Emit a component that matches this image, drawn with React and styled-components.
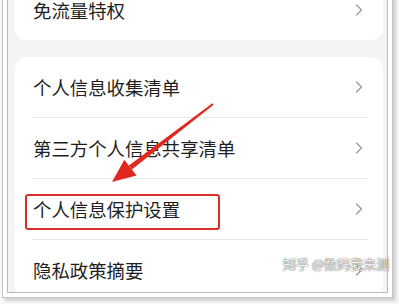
import React from "react";
import styled, { createGlobalStyle } from "styled-components";

const Global = createGlobalStyle`
  html, body { margin: 0; padding: 0; background: #ffffff; }
  body { font-family: "Noto Sans CJK SC", "Noto Sans", sans-serif; }
`;

const Stage = styled.div`
  position: relative;
  width: 399px;
  height: 304px;
  overflow: hidden;
  background: #f7f7f7;
`;

const Frame = styled.div`
  box-sizing: border-box;
  width: 391px;
  height: 308px;
  margin: -10px 0 0 2px;
  padding: 4px;
  background: #ffffff;
  border: 1px solid #c4c4c4;
  box-shadow: 3px 3px 3px rgba(0, 0, 0, 0.16);
`;

const Screen = styled.div`
  box-sizing: border-box;
  height: 100%;
  border: 1px solid #b9b9b9;
  background: #f4f4f4;
  padding: 0 4px 0 7px;
  overflow: hidden;
  display: flex;
  flex-direction: column;
`;

const Card = styled.div`
  background: #ffffff;
  border-radius: 12px;
  margin-top: ${(p) => p.$offset}px;
  display: flex;
  flex-direction: column;
  flex-shrink: 0;
`;

const Row = styled.div`
  position: relative;
  height: 60px;
  padding: 0 20px 0 18px;
  display: flex;
  align-items: center;
  justify-content: space-between;
  flex-shrink: 0;
`;

const Label = styled.span`
  font-family: "Noto Sans CJK SC", "Noto Sans", sans-serif;
  font-size: 18.4px;
  color: #1e1e1e;
  line-height: 1;
`;

const Divider = styled.div`
  height: 1px;
  margin: 0 15px 0 17px;
  background: #e9e9e9;
  flex-shrink: 0;
`;

const Highlight = styled.div`
  position: absolute;
  left: 10px;
  top: 15px;
  width: 195px;
  height: 36px;
  box-sizing: border-box;
  border: 2px solid #d8302a;
  border-radius: 3px;
  pointer-events: none;
`;

const ArrowLayer = styled.svg`
  position: absolute;
  left: 0;
  top: 0;
  pointer-events: none;
`;

const Watermark = styled.div`
  position: absolute;
  left: 283px;
  top: 254px;
  font-family: "Noto Sans CJK SC", sans-serif;
  font-size: 13px;
  color: rgba(255, 255, 255, 0.95);
  text-shadow: 0 0 1px rgba(0, 0, 0, 0.7), 0 0 2px rgba(0, 0, 0, 0.4);
  white-space: nowrap;
`;

const Chevron = () => (
  <svg width="8" height="12" viewBox="0 0 8 12">
    <polyline
      points="1.5,1 6.5,6 1.5,11"
      fill="none"
      stroke="#9a9a9a"
      strokeWidth="1.3"
      strokeLinecap="round"
      strokeLinejoin="round"
    />
  </svg>
);

const items = [
  "个人信息收集清单",
  "第三方个人信息共享清单",
  "个人信息保护设置",
  "隐私政策摘要",
];

export default function App() {
  return (
    <>
      <Global />
      <Stage>
        <Frame>
          <Screen>
            <Card $offset={-16}>
              <Row>
                <Label>免流量特权</Label>
                <Chevron />
              </Row>
            </Card>
            <Card $offset={17}>
              {items.map((t, i) => (
                <React.Fragment key={t}>
                  {i > 0 && <Divider />}
                  <Row>
                    <Label>{t}</Label>
                    <Chevron />
                    {i === 2 && <Highlight />}
                  </Row>
                </React.Fragment>
              ))}
            </Card>
          </Screen>
        </Frame>
        <ArrowLayer width="399" height="304" viewBox="0 0 399 304">
          <polygon
            points="213.6,104.8 212.4,103.2 128.9,165.6 131.9,169.6"
            fill="#e0281f"
          />
          <polygon
            points="112,182 124.3,159.7 136.5,175.5"
            fill="#e0281f"
          />
        </ArrowLayer>
        <Watermark>知乎 @数码我来测</Watermark>
      </Stage>
    </>
  );
}
